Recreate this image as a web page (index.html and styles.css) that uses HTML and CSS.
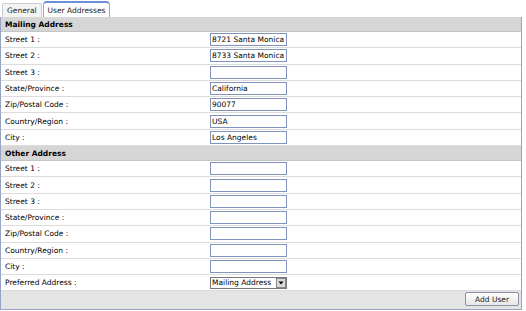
FILE: index.html
```html
<!DOCTYPE html>
<html lang="en">
<head>
  <meta charset="UTF-8" />
  <title>Edit User</title>
  <link rel="stylesheet" href="styles.css">
</head>
<body>
  <div class="tabs">
    <div class="tab">General</div>
    <div class="tab active">User Addresses</div>
  </div>
  <div class="panel">
    <table class="form-table">
      <tr class="section"><td colspan="2">Mailing Address</td></tr>
      <tr><td class="label">Street 1 :</td><td><input type="text" value="8721 Santa Monica" /></td></tr>
      <tr><td class="label">Street 2 :</td><td><input type="text" value="8733 Santa Monica Blvd" /></td></tr>
      <tr><td class="label">Street 3 :</td><td><input type="text" /></td></tr>
      <tr><td class="label">State/Province :</td><td><input type="text" value="California" /></td></tr>
      <tr><td class="label">Zip/Postal Code :</td><td><input type="text" value="90077" /></td></tr>
      <tr><td class="label">Country/Region :</td><td><input type="text" value="USA" /></td></tr>
      <tr><td class="label">City :</td><td><input type="text" value="Los Angeles" /></td></tr>
      <tr class="section"><td colspan="2">Other Address</td></tr>
      <tr><td class="label">Street 1 :</td><td><input type="text" /></td></tr>
      <tr><td class="label">Street 2 :</td><td><input type="text" /></td></tr>
      <tr><td class="label">Street 3 :</td><td><input type="text" /></td></tr>
      <tr><td class="label">State/Province :</td><td><input type="text" /></td></tr>
      <tr><td class="label">Zip/Postal Code :</td><td><input type="text" /></td></tr>
      <tr><td class="label">Country/Region :</td><td><input type="text" /></td></tr>
      <tr><td class="label">City :</td><td><input type="text" /></td></tr>
      <tr>
        <td class="label">Preferred Address :</td>
        <td>
          <div class="select">
            <span class="select-text">Mailing Address</span>
            <span class="select-arrow">
              <svg width="8" height="8" viewBox="0 0 8 8"><path d="M1.5 2.5h5L4 5.5z" fill="#000"/></svg>
            </span>
          </div>
        </td>
      </tr>
    </table>
    <div class="footer">
      <button class="add-btn">Add User</button>
    </div>
  </div>
</body>
</html>
```
FILE: styles.css
```css
body {
  margin: 0;
  font-family: "DejaVu Sans", Verdana, sans-serif;
  font-size: 7.5px;
  color: #000;
  background: #fff;
}
.tabs {
  display: flex;
  align-items: flex-end;
  height: 17px;
  padding-left: 2px;
  gap: 1px;
}
.tab {
  height: 13px;
  line-height: 13px;
  padding: 0 4px;
  border: 1px solid #c8ccd4;
  border-bottom: none;
  border-radius: 2px 2px 0 0;
  background: #f4f4f4;
  color: #222;
}
.tab.active {
  height: 14px;
  line-height: 15px;
  background: #fff;
  border-top: 2px solid #6d8fd8;
  border-left-color: #9aa6c0;
  border-right-color: #9aa6c0;
  border-radius: 4px 4px 0 0;
}
.panel {
  width: 520px;
  border: 1px solid #97a3c2;
  border-top: none;
}
.form-table {
  width: 100%;
  border-collapse: collapse;
}
.form-table td {
  height: 15.3px;
  padding: 0;
  border-bottom: 1px solid #dcdcdc;
}
.form-table .label {
  width: 205px;
  padding-left: 4px;
}
.section td {
  height: 14px;
  padding-left: 4px;
  background: #d6d6d6;
  font-weight: bold;
  border-bottom: 1px solid #c4c4c4;
}
.form-table input {
  display: block;
  box-sizing: border-box;
  width: 77px;
  height: 13px;
  margin: 0;
  padding: 0 1px;
  border: 1px solid #8192bd;
  font-family: inherit;
  font-size: 7.5px;
  color: #000;
  background: #fff;
}
.select {
  display: flex;
  align-items: center;
  box-sizing: border-box;
  width: 77px;
  height: 12px;
  border: 1px solid #777;
  background: #fff;
}
.select-text {
  flex: 1;
  padding-left: 1px;
  white-space: nowrap;
  overflow: hidden;
}
.select-arrow {
  display: flex;
  flex-shrink: 0;
  width: 10px;
  height: 10px;
  background: #d8d8d8;
  border: 1px solid #888;
  box-sizing: border-box;
}
.footer {
  display: flex;
  justify-content: flex-end;
  background: #e4e4e4;
  height: 17px;
  padding: 1px 2px 0 0;
}
.add-btn {
  width: 54px;
  height: 14px;
  padding: 0;
  font-family: inherit;
  font-size: 7.5px;
  color: #222;
  background: linear-gradient(#fff, #e6e6e6);
  border: 1px solid #8a93a8;
  border-radius: 2px;
}
```
